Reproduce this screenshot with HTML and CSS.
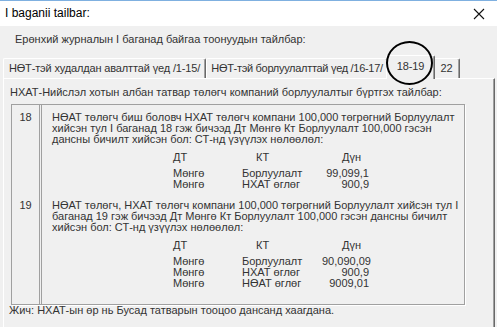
FILE: index.html
```html
<!DOCTYPE html>
<html lang="mn">

<head>
    <meta charset="UTF-8">
    <meta name="viewport" content="width=device-width, initial-scale=1.0">
    <title>I baganii tailbar</title>
    <link rel="stylesheet" href="styles.css">
</head>

<body>

    <div class="window">
        <!-- Гарчгийн мөр -->
        <div class="titlebar">
            <span class="title">I baganii tailbar:</span>
            <svg class="close" width="12" height="12" viewBox="0 0 12 12">
                <path d="M1 1 L11 11 M11 1 L1 11" stroke="#111" stroke-width="1.1" fill="none"/>
            </svg>
        </div>

        <p class="intro">Ерөнхий журналын I баганад байгаа тоонуудын тайлбар:</p>

        <!-- Табууд -->
        <div class="tabs">
            <div class="tab tab-buy">НӨТ-тэй худалдан авалттай үед /1-15/</div>
            <div class="tab tab-sell">НӨТ-тэй борлуулалттай үед /16-17/</div>
            <div class="tab active">18-19</div>
            <div class="tab tab-last">22</div>
        </div>

        <div class="panel">
            <p class="caption">НХАТ-Нийслэл хотын албан татвар төлөгч компаний борлуулалтыг бүртгэх тайлбар:</p>

            <div class="rules">
                <div class="num">18</div>
                <div class="body">
                    <p class="text">НӨАТ төлөгч биш боловч НХАТ төлөгч компани 100,000 төгрөгний Борлуулалт<br>
                        хийсэн тул I баганад 18 гэж бичээд Дт Мөнгө Кт Борлуулалт 100,000 гэсэн<br>
                        дансны бичилт хийсэн бол: СТ-нд үзүүлэх нөлөөлөл:</p>
                    <div class="entries">
                        <span class="head">ДТ</span><span class="head kt">КТ</span><span class="head amount">Дүн</span>
                        <span>Мөнгө</span><span>Борлуулалт</span><span class="sum">99,099,1</span>
                        <span>Мөнгө</span><span>НХАТ өглөг</span><span class="sum">900,9</span>
                    </div>
                </div>

                <div class="num last">19</div>
                <div class="body last">
                    <p class="text">НӨАТ төлөгч, НХАТ төлөгч компани 100,000 төгрөгний Борлуулалт хийсэн тул I<br>
                        баганад 19 гэж бичээд Дт Мөнгө Кт Борлуулалт 100,000 гэсэн дансны бичилт<br>
                        хийсэн бол: СТ-нд үзүүлэх нөлөөлөл:</p>
                    <div class="entries">
                        <span class="head">ДТ</span><span class="head kt">КТ</span><span class="head amount">Дүн</span>
                        <span>Мөнгө</span><span>Борлуулалт</span><span class="sum">90,090,09</span>
                        <span>Мөнгө</span><span>НХАТ өглөг</span><span class="sum">900,9</span>
                        <span>Мөнгө</span><span>НӨАТ өглөг</span><span class="sum">9009,01</span>
                    </div>
                </div>
            </div>

            <p class="note">Жич: НХАТ-ын өр нь Бусад татварын тооцоо дансанд хаагдана.</p>
        </div>

        <!-- Гараар зурсан тэмдэглэгээ -->
        <div class="mark"></div>
    </div>

</body>

</html>
```

FILE: styles.css
```css
/* Ерөнхий */
body {
    margin: 0;
    font-family: 'Liberation Sans', Arial, sans-serif;
    font-size: 11px;
    line-height: 11px;
    color: #333;
    background-color: #f0f0f0;
}

p {
    margin: 0;
}

.window {
    position: relative;
    width: 497px;
    height: 327px;
    overflow: hidden;
    background-color: #f0f0f0;
}

/* Гарчгийн мөр */
.titlebar {
    height: 25px;
    border-top: 1px solid #7fb0e0;
    background-color: #fff;
    display: flex;
    align-items: center;
    justify-content: space-between;
    padding: 0 12px 0 5px;
}

.title {
    font-size: 12px;
    color: #000;
}

.intro {
    margin: 8px 0 0 15px;
}

/* Табууд */
.tabs {
    display: flex;
    align-items: flex-end;
    height: 23px;
    margin: 10px 0 0 3px;
}

.tab {
    box-sizing: border-box;
    height: 20px;
    line-height: 19px;
    text-align: center;
    letter-spacing: -0.15px;
    border-top: 1px solid #fff;
    border-left: 1px solid #fff;
    border-right: 1px solid #696969;
    box-shadow: inset -1px 0 0 #a0a0a0;
    border-radius: 2px 2px 0 0;
    white-space: nowrap;
}

.tab-buy {
    width: 203px;
}

.tab-sell {
    width: 182px;
    letter-spacing: -0.3px;
}

.tab-last {
    width: 27px;
}

.tab.active {
    position: relative;
    z-index: 1;
    width: 49px;
    height: 24px;
    line-height: 21px;
    margin: 0 -2px -1px;
    background-color: #f0f0f0;
}

/* Табын хуудас */
.panel {
    height: 260px;
    margin: 0 2px 0 3px;
    padding: 8px 0 0 6px;
    border-top: 1px solid #fff;
    border-left: 1px solid #fff;
    border-right: 1px solid #696969;
    box-shadow: inset -1px 0 0 #a0a0a0;
}

.caption {
    margin-bottom: 6px;
}

/* Тайлбарын хүснэгт */
.rules {
    display: grid;
    grid-template-columns: 28px 1fr;
    column-gap: 1px;
    width: 454px;
    margin-left: 1px;
    box-sizing: border-box;
    border: 1px solid #a0a0a0;
    box-shadow: 1px 1px 0 #fff;
}

.num {
    border-right: 1px solid #a0a0a0;
    text-align: center;
    padding: 7px 0 3px;
}

.body {
    border-left: 1px solid #a0a0a0;
    padding: 7px 0 3px 10px;
    white-space: nowrap;
}

.num.last, .body.last {
    padding-bottom: 15px;
}

.entries {
    display: grid;
    grid-template-columns: 69px 80px 47px;
    margin: 7px 0 0 121px;
}

.entries .head {
    margin-bottom: 5px;
}

.entries .kt {
    padding-left: 14px;
}

.entries .amount {
    padding-left: 20px;
}

.entries .sum {
    text-align: right;
}

.note {
    margin: 0 0 0 -1px;
}

/* Дугуйлсан тэмдэг */
.mark {
    position: absolute;
    z-index: 2;
    left: 386px;
    top: 41px;
    width: 43px;
    height: 40px;
    border: 2px solid #000;
    border-radius: 50%;
}
```
